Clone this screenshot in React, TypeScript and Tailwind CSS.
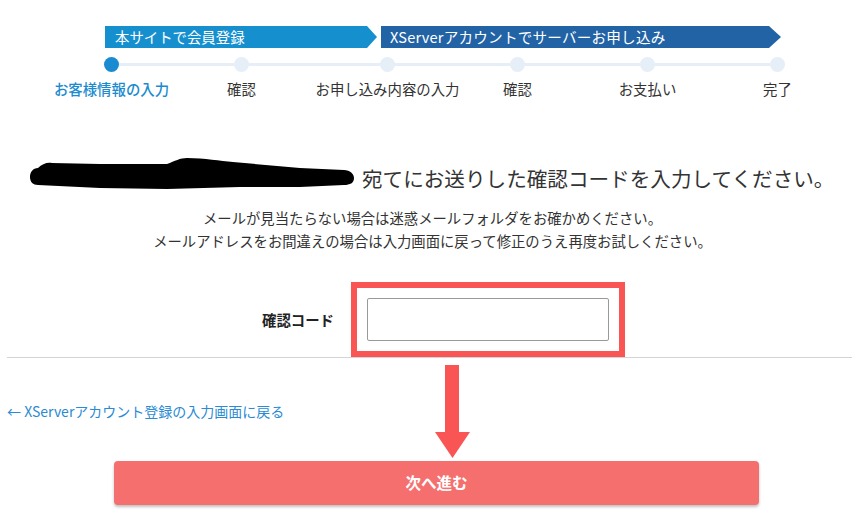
import React from 'react';

const steps = [
  { label: 'お客様情報の入力', active: true },
  { label: '確認', active: false },
  { label: 'お申し込み内容の入力', active: false },
  { label: '確認', active: false },
  { label: 'お支払い', active: false },
  { label: '完了', active: false },
];

// gaps between dot edges (px), matches the uneven spacing of the reference
const connectorClasses = ['w-[115px]', 'w-[131px]', 'w-[115px]', 'w-[115px]', 'w-[115px]'];

const Scribble: React.FC = () => (
  <svg width="324" height="36" viewBox="0 0 324 36" className="mt-[-8px] shrink-0">
    <path
      d="M 8 13 C 12 9, 17 7, 22 8 L 70 9 L 137 9 C 145 6, 150 3, 157 3 C 175 3, 190 6, 203 7 L 270 13 L 314 15 C 320 15, 324 19, 324 23 C 324 28, 320 30, 314 30 L 270 32 L 210 32 L 137 34 L 70 33 L 8 30 C 3 30, 0 27, 0 22 C 0 17, 3 13, 8 13 Z"
      fill="#000"
    />
  </svg>
);

const App: React.FC = () => {
  return (
    <div className="min-h-[527px] w-[852px] bg-white pt-[26px] font-['Noto_Sans_CJK_JP',sans-serif] text-[#333]">
      {/* progress banner */}
      <div className="flex pl-[105px]">
        <div className="flex h-[22px] w-[272px] items-center bg-[#168fcf] pl-[10px] text-[14.4px] text-white [clip-path:polygon(0_0,calc(100%-10px)_0,100%_50%,calc(100%-10px)_100%,0_100%)]">
          本サイトで会員登録
        </div>
        <div className="ml-[4px] flex h-[22px] w-[400px] items-center bg-[#2263a6] pl-[9px] text-[14.6px] tracking-[0.2px] text-white [clip-path:polygon(0_0,calc(100%-12px)_0,100%_50%,calc(100%-12px)_100%,0_100%)]">
          XServerアカウントでサーバーお申し込み
        </div>
      </div>

      {/* stepper */}
      <div className="mt-[9px] flex items-start pl-[104px]">
        {steps.map((s, i) => (
          <React.Fragment key={i}>
            <div className="flex w-[15px] flex-col items-center">
              <div className={`h-[15px] w-[15px] rounded-full ${s.active ? 'bg-[#1a8bd0]' : 'bg-[#e6eef7]'}`} />
              <span
                className={`mt-[7px] whitespace-nowrap text-[14.4px] leading-[20px] ${s.active ? 'font-medium text-[#1a8bd0]' : 'text-[#333]'}`}
              >
                {s.label}
              </span>
            </div>
            {i < connectorClasses.length && <div className={`mt-[6px] h-[3px] bg-[#e6eef7] ${connectorClasses[i]}`} />}
          </React.Fragment>
        ))}
      </div>

      {/* heading */}
      <div className="mt-[64px] flex items-start gap-[8px] pl-[30px]">
        <Scribble />
        <h1 className="whitespace-nowrap text-[20.6px] leading-[30px] font-normal text-[#333]">
          宛てにお送りした確認コードを入力してください。
        </h1>
      </div>

      <div className="mt-[13px] pl-[13px] text-center text-[14.35px] leading-[23px] text-[#333]">
        <p>メールが見当たらない場合は迷惑メールフォルダをお確かめください。</p>
        <p>メールアドレスをお間違えの場合は入力画面に戻って修正のうえ再度お試しください。</p>
      </div>

      {/* form */}
      <div className="mt-[30px] flex items-center pl-[262px]">
        <span className="w-[89px] text-[14.4px] font-bold text-[#222]">確認コード</span>
        <div className="border-[6px] border-[#fa5555] p-[10px]">
          <input className="block h-[43px] w-[242px] rounded-[2px] border border-[#999] bg-white outline-none" />
        </div>
      </div>

      <div className="relative">
        <div className="ml-[7px] h-px bg-[#d4d4d4]" />

        <a className="mt-[43px] ml-[7px] block text-[14px] leading-[20px] text-[#2a8bd2]">
          ← XServerアカウント登録の入力画面に戻る
        </a>

        <button className="mt-[40px] ml-[114px] flex h-[44px] w-[645px] items-center justify-center rounded-[4px] bg-[#f56f6f] text-[15.5px] font-bold text-white shadow-[0_2px_3px_rgba(0,0,0,0.25)]">
          次へ進む
        </button>

        {/* annotation arrow */}
        <svg width="36" height="94" viewBox="0 0 36 94" className="absolute top-[8px] left-[435px]">
          <rect x="10" y="0" width="14" height="68" fill="#f95555" />
          <polygon points="0,67 35,67 17.5,93" fill="#f95555" />
        </svg>
      </div>
    </div>
  );
};

export default App;
